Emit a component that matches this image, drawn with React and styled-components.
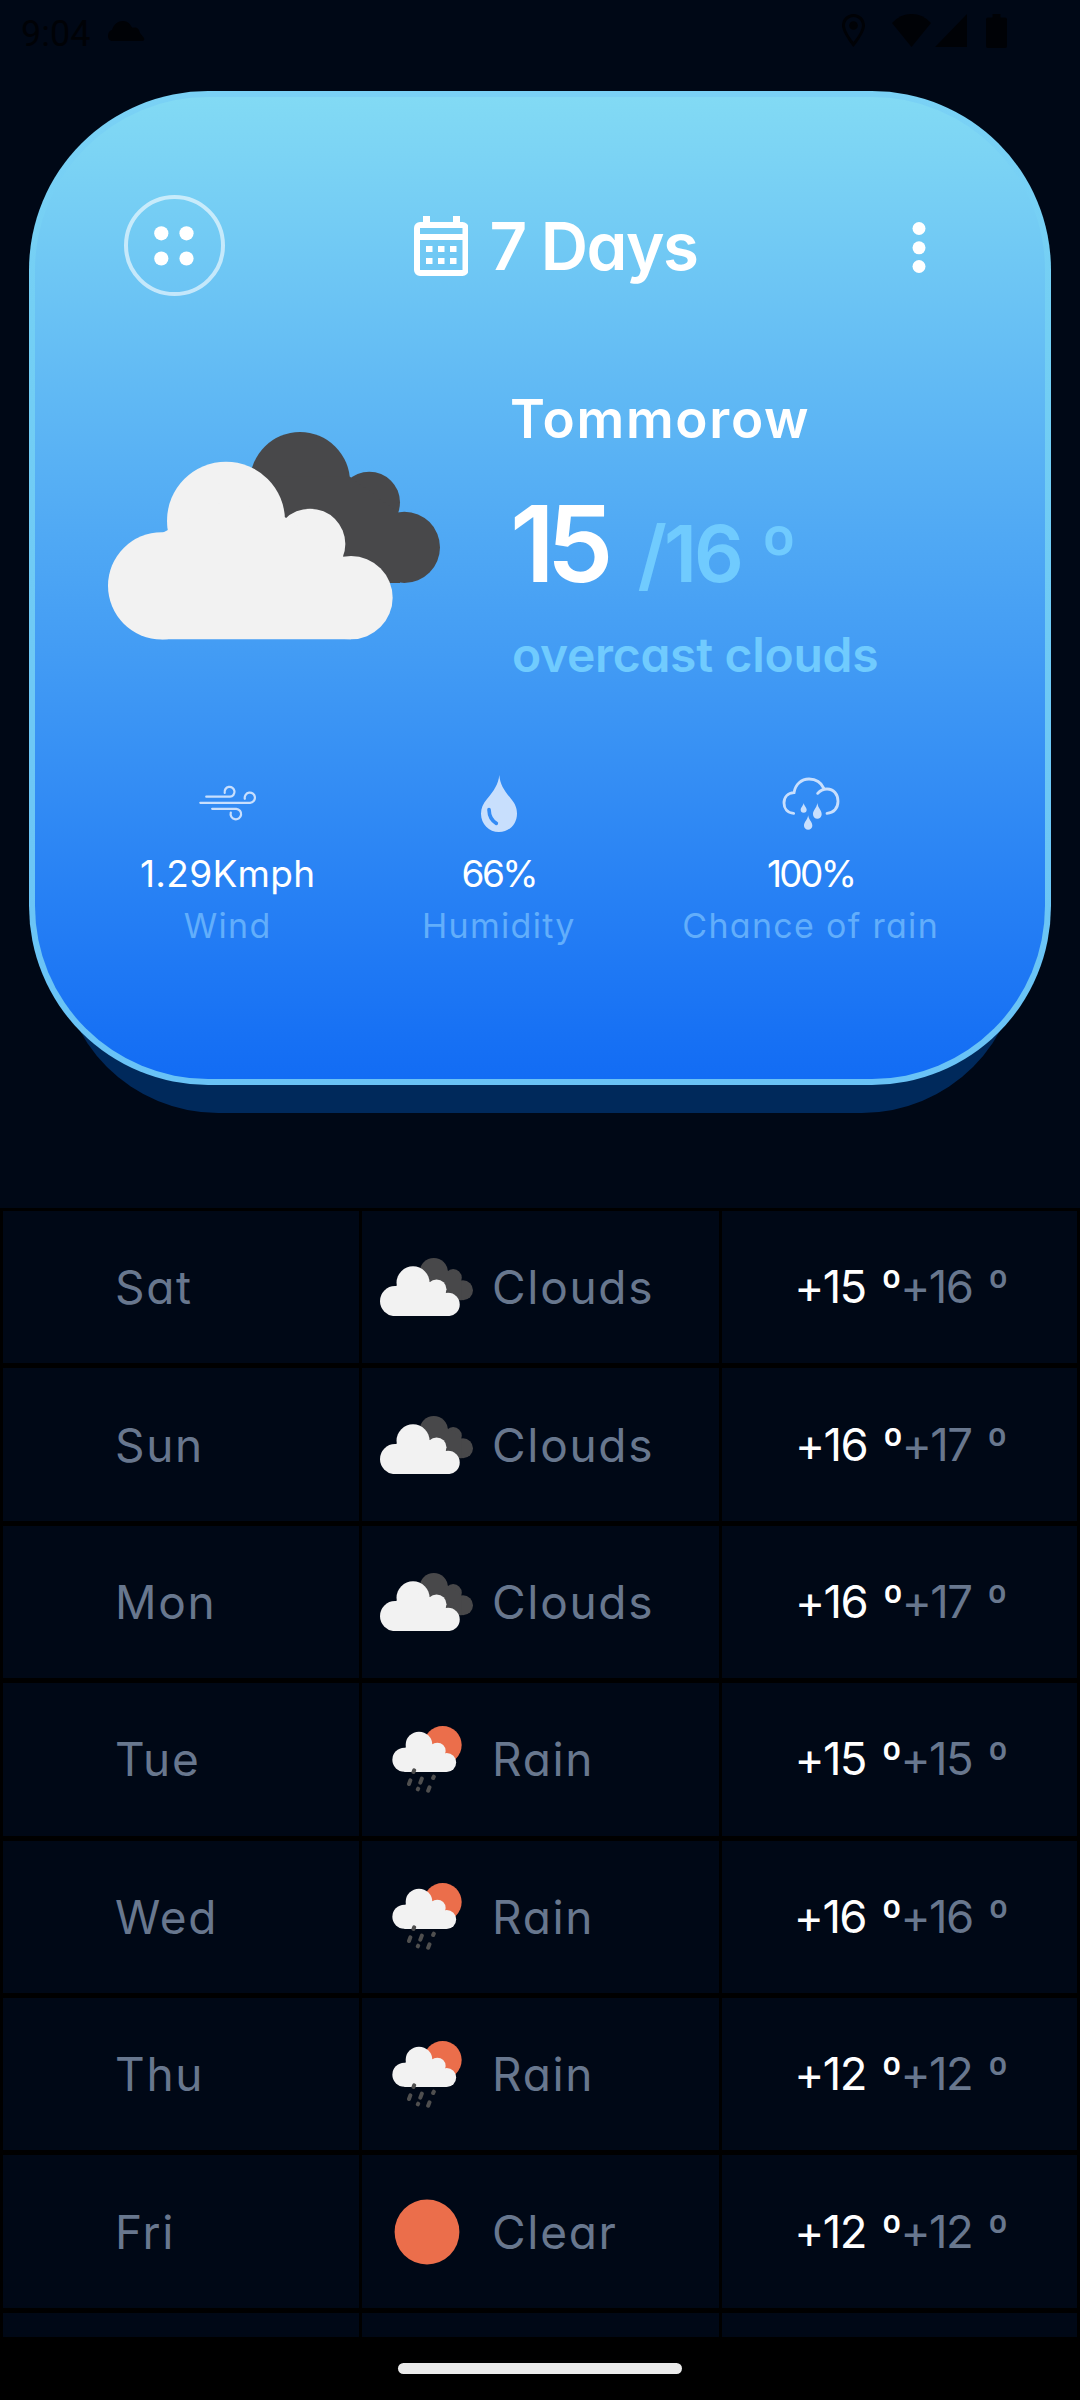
import React from 'react';
import styled, { createGlobalStyle } from 'styled-components';

const GlobalStyle = createGlobalStyle`
  body { margin: 0; background: #000816; }
  * { box-sizing: border-box; }
  svg { display: block; flex: none; }
`;

const Screen = styled.div`
  width: 1080px;
  height: 2400px;
  display: flex;
  flex-direction: column;
  overflow: hidden;
  background: #000816;
  color: #fff;
  font-family: Inter, "Liberation Sans", sans-serif;
  font-feature-settings: "cv11";
`;

const StatusBar = styled.div`
  height: 91.3px;
  flex: none;
  display: flex;
  align-items: flex-start;
  padding: 14px 73.5px 0 21px;
  color: #000206;
`;

const Clock = styled.span`
  font: 400 36px/40px Roboto, sans-serif;
  margin-right: 18px;
`;

const NoticeIcon = styled.div`
  padding-top: 7px;
`;

const StatusIcons = styled.div`
  margin-left: auto;
  display: flex;
  align-items: flex-start;
`;

const Signals = styled.div`
  display: flex;
  gap: 4px;
  margin: 0 19px 0 27px;
`;

const Card = styled.section`
  position: relative;
  z-index: 1;
  flex: none;
  height: 993.3px;
  margin: 0 28.6px;
  padding: 98px 89.4px 0;
  border: 6px solid transparent;
  border-radius: 179px;
  background:
    linear-gradient(#82daf4, #126cf4) padding-box,
    linear-gradient(#7ad1f5, #73cff4 25%, #69c2f6) border-box;
`;

const CardShade = styled.div`
  flex: none;
  height: 320px;
  margin: -291.9px 61px 0;
  border-radius: 157px;
  background: #00295b;
`;

const Header = styled.header`
  height: 101px;
  display: flex;
  align-items: center;
`;

const RoundButton = styled.button`
  width: 101px;
  height: 101px;
  padding: 0;
  display: flex;
  align-items: center;
  justify-content: center;
  border: 4px solid rgba(255, 255, 255, 0.6);
  border-radius: 50%;
  background: none;
`;

const Title = styled.h1`
  display: flex;
  align-items: center;
  gap: 21px;
  margin: 0 auto 0 189px;
  font-size: 66px;
`;

const TitleText = styled.span`
  padding-top: 3px;
  font-size: 65.5px;
  line-height: 80px;
  font-weight: 600;
  letter-spacing: -1.5px;
`;

const Summary = styled.div`
  display: flex;
  margin-top: 88px;
`;

const SummaryIcon = styled.div`
  width: 388px;
  margin: 48px 16px 0 -16px;
`;

const SummaryText = styled.div`
  display: flex;
  flex-direction: column;
  align-items: flex-start;
`;

const Text = styled.span`
  white-space: pre;
  font-size: ${(p) => p.$size}px;
  line-height: ${(p) => p.$line || p.$size}px;
  font-weight: ${(p) => p.$weight || 400};
  letter-spacing: ${(p) => p.$track || 0}px;
  color: ${(p) => p.$color || '#fff'};
`;

const Place = styled(Text)`
  margin-left: -2px;
`;

const Low = styled(Text)`
  margin: 0 32px 0 -2px;
`;

const Temps = styled.div`
  display: flex;
  align-items: baseline;
  height: 120px;
  margin: 29.5px 0 21px;
`;

const RowText = styled.span`
  white-space: pre;
  font-size: 46px;
  line-height: 60px;
  letter-spacing: 1.7px;
  color: #68778e;
`;

const RowTemp = styled.span`
  white-space: pre;
  font-size: 45.5px;
  line-height: 60px;
  letter-spacing: -1.6px;
  word-spacing: 4.5px;
  color: ${(p) => (p.$high ? '#68778e' : '#fff')};
`;

const Stats = styled.div`
  display: flex;
  justify-content: space-between;
  margin: 88.5px 17px 0 16px;
`;

const Stat = styled.div`
  display: flex;
  flex-direction: column;
  align-items: center;
`;

const StatIcon = styled.div`
  height: 60px;
  margin-bottom: 18.5px;
  display: flex;
  align-items: center;
`;

const List = styled.div`
  flex: none;
  height: 1129px;
  margin-top: 95.3px;
  padding: 3px 3px 0;
  overflow: hidden;
  background: #000;
`;

const Row = styled.div`
  display: grid;
  grid-template-columns: 356px 357px 355px;
  gap: 3px;
  height: 157.4px;
  border-bottom: 5px solid #000;
`;

const Cell = styled.div`
  display: flex;
  align-items: center;
  justify-content: ${(p) => p.$justify || 'flex-start'};
  padding-left: ${(p) => p.$pad || 0}px;
  background: #000816;
`;

const RowIcon = styled.div`
  width: 96px;
  margin-right: 17.5px;
  display: flex;
  justify-content: center;
`;

const NavBar = styled.div`
  flex: 1;
  display: flex;
  justify-content: center;
  padding-top: 26px;
  background: #000;
`;

const Handle = styled.div`
  width: 284px;
  height: 11px;
  border-radius: 6px;
  background: #ebebeb;
`;

const CloudsIcon = ({ width }) => (
  <svg width={width} height={width * 0.6245} viewBox="84 96 996 622">
    <g fill="#48484a">
      <circle cx="660" cy="246" r="150" />
      <circle cx="868" cy="307" r="92" />
      <circle cx="973" cy="442" r="107" />
      <path d="M560 230h250l150 112v207H700z" />
    </g>
    <g fill="#f2f2f2">
      <circle cx="438" cy="362" r="177" />
      <circle cx="245" cy="557.500" r="161" />
      <circle cx="690" cy="432" r="106" />
      <circle cx="813" cy="593" r="125" />
      <path d="M245 400L438 300L615 352L790 470L813 718H245z" />
    </g>
  </svg>
);

const RainIcon = () => (
  <svg width="70" height="67" viewBox="155 197 210 201">
    <circle cx="307" cy="254" r="57" fill="#eb6e4b" />
    <g fill="#f2f2f2">
      <circle cx="236" cy="254" r="40" />
      <circle cx="192" cy="298.500" r="36" />
      <circle cx="291" cy="272" r="25" />
      <circle cx="319" cy="306.500" r="28.500" />
      <path d="M192 264L236 240L275 251L314 279L319 335H192z" />
    </g>
    <g stroke="#4f4f4f" strokeWidth="12" strokeLinecap="round">
      <path d="M221.500 330L219.500 335M210 360L206 371M244.500 355L240 367M280.500 349L278.500 353M233.500 385L232.500 387M267.500 381L263.500 391" />
    </g>
  </svg>
);

const SunIcon = () => (
  <svg width="66" height="66" viewBox="0 0 66 66">
    <circle cx="33" cy="33" r="32.400" fill="#eb6e4b" />
  </svg>
);

const GridDots = () => (
  <svg width="42" height="42" viewBox="0 0 42 42" fill="#fff">
    <circle cx="8.300" cy="8.300" r="7.100" />
    <circle cx="33.500" cy="8.300" r="7.100" />
    <circle cx="8.300" cy="33.500" r="7.100" />
    <circle cx="33.500" cy="33.500" r="7.100" />
  </svg>
);

const CalendarIcon = () => (
  <svg width="54.500" height="60" viewBox="0 0 54.500 60" fill="#fff">
    <path
      fillRule="evenodd"
      d="M9 0h7v6h23V0h7v6h2.500a6 6 0 0 1 6 6v42a6 6 0 0 1-6 6H6a6 6 0 0 1-6-6V12a6 6 0 0 1 6-6h3zM6 12v6h42.500v-6zM6 24v30h42.500V24z"
    />
    <path d="M12 30h6.500v6H12zM24 30h6.500v6H24zM36 30h6.500v6H36zM12 42h6.500v6H12zM24 42h6.500v6H24zM36 42h6.500v6H36z" />
  </svg>
);

const MoreIcon = () => (
  <svg width="74" height="54" viewBox="0 0 74 54" fill="#fff">
    <circle cx="37" cy="9.500" r="6.500" />
    <circle cx="37" cy="28.800" r="6.500" />
    <circle cx="37" cy="47.500" r="6.500" />
  </svg>
);

const WindIcon = () => (
  <svg width="58" height="36" viewBox="296 133 176 108" fill="none" stroke="#c8dffd" strokeWidth="6.800" strokeLinecap="round">
    <path d="M318 168H390A15 15 0 1 0 374 156" />
    <path d="M300 186.500H451A15.500 15.500 0 1 0 435 174" />
    <path d="M336 204.500H409A16 16 0 1 1 392.500 216" />
  </svg>
);

const DropIcon = () => (
  <svg width="36" height="57" viewBox="1143 102 108 171">
    <path d="M1198 102C1200 130 1212 148 1233 173C1246 189 1251 201 1251 218C1251 249 1228 273 1197 273C1167 273 1143 249 1143 218C1143 201 1149 188 1161 174C1182 149 1195 130 1198 102Z" fill="#c8dffd" />
    <path d="M1167 206Q1168 235 1189 247" fill="none" stroke="#338bf5" strokeWidth="11" strokeLinecap="round" />
  </svg>
);

const ShowerIcon = () => (
  <svg width="58" height="53" viewBox="607 106 174 159">
    <g fill="none" stroke="#c8dffd" strokeWidth="8.500" strokeLinecap="round">
      <path d="M642 215C623 214 613 201 613 184C613 166 625 154 643 153C647 128 665 112 688 112C709 112 725 123 733 141" />
      <path d="M714 155C721 147 731 142 742 142C762 142 775 158 775 179C775 200 762 214 742 215" />
    </g>
    <g fill="#c8dffd">
      <path d="M672 184C674 194 681 197 681 204.500A9 9 0 0 1 663 204.500C663 197 670 194 672 184Z" />
      <path d="M713 184C715 200 726 205 726 218A13 13 0 0 1 700 218C700 205 711 200 713 184Z" />
      <path d="M685.500 221C687 235 698 240 698 252A12.500 12.500 0 0 1 673 252C673 240 684 235 685.500 221Z" />
    </g>
  </svg>
);

const stats = [
  { Icon: WindIcon, value: '1.29Kmph', track: 0.3, label: 'Wind' },
  { Icon: DropIcon, value: '66%', track: -2.5, label: 'Humidity' },
  { Icon: ShowerIcon, value: '100%', track: -2.7, label: 'Chance of rain' },
];

const days = [
  ['Sat', 'Clouds', 15, 16],
  ['Sun', 'Clouds', 16, 17],
  ['Mon', 'Clouds', 16, 17],
  ['Tue', 'Rain', 15, 15],
  ['Wed', 'Rain', 16, 16],
  ['Thu', 'Rain', 12, 12],
  ['Fri', 'Clear', 12, 12],
];

const SKY = '#70cbfe';

const ConditionIcon = ({ kind }) => {
  if (kind === 'Clouds') return <CloudsIcon width={93} />;
  return kind === 'Rain' ? <RainIcon /> : <SunIcon />;
};

export default function App() {
  return (
    <Screen>
      <GlobalStyle />
      <StatusBar>
        <Clock>9:04</Clock>
        <NoticeIcon>
          <svg width="37" height="20" viewBox="0 0 37 20" fill="currentColor">
            <path d="M3.500 20Q0 19 0 15Q0 10 4 9C6 3 10 0 15 0C20 0 22 3 24 6.500C30 6 31 8 32 12L36 17Q37 20 34 20Z" />
          </svg>
        </NoticeIcon>
        <StatusIcons>
          <svg width="23" height="33" viewBox="0 0 23 33" fill="currentColor">
            <path fillRule="evenodd" d="M11.500 0C5 0 0 5 0 11.500C0 19 11.500 33 11.500 33S23 19 23 11.500C23 5 18 0 11.500 0ZM11.500 3C16 3 20 7 20 11.500C20 16 15 24 11.500 28C8 24 3 16 3 11.500C3 7 7 3 11.500 3Z" />
            <circle cx="11.500" cy="11.500" r="4.300" />
          </svg>
          <Signals>
            <svg width="39" height="33" viewBox="0 0 39 33" fill="currentColor">
              <path d="M0 9Q8 0 19.500 0T39 9L19.500 33Z" />
            </svg>
            <svg width="32" height="33" viewBox="0 0 32 33" fill="currentColor">
              <path d="M32 0V33H0Z" />
            </svg>
          </Signals>
          <svg width="21" height="34" viewBox="0 0 21 34" fill="currentColor">
            <path d="M6.500 0h8v3.500H19a2 2 0 0 1 2 2V32a2 2 0 0 1-2 2H2a2 2 0 0 1-2-2V5.500a2 2 0 0 1 2-2h4.500z" />
          </svg>
        </StatusIcons>
      </StatusBar>

      <Card>
        <Header>
          <RoundButton aria-label="Menu"><GridDots /></RoundButton>
          <Title>
            <CalendarIcon />
            <TitleText>7 Days</TitleText>
          </Title>
          <MoreIcon />
        </Header>

        <Summary>
          <SummaryIcon><CloudsIcon width={332} /></SummaryIcon>
          <SummaryText>
            <Place $size={53} $line={70} $weight={600} $track={1.7}>Tommorow</Place>
            <Temps>
              <Low $size={106} $line={120} $weight={600} $track={-8}>15</Low>
              <Text $size={78} $line={120} $weight={600} $track={-3} $color={SKY}>/16</Text>
              <Text $size={78} $line={120} $weight={600} $color={SKY}>{' º'}</Text>
            </Temps>
            <Text $size={48} $line={60} $weight={600} $track={-0.3} $color={SKY}>overcast clouds</Text>
          </SummaryText>
        </Summary>

        <Stats>
          {stats.map(({ Icon, value, track, label }) => (
            <Stat key={label}>
              <StatIcon><Icon /></StatIcon>
              <Text $size={37} $line={44} $track={track}>{value}</Text>
              <Text $size={34} $line={59} $track={1.3} $color="#62aefb">{label}</Text>
            </Stat>
          ))}
        </Stats>
      </Card>
      <CardShade />

      <List>
        {days.map(([day, kind, low, high]) => (
          <Row key={day}>
            <Cell $pad={112}><RowText>{day}</RowText></Cell>
            <Cell $pad={16.5}>
              <RowIcon><ConditionIcon kind={kind} /></RowIcon>
              <RowText>{kind}</RowText>
            </Cell>
            <Cell $justify="center" $pad={2}>
              <RowTemp>+{low} º</RowTemp>
              <RowTemp $high>+{high} º</RowTemp>
            </Cell>
          </Row>
        ))}
        <Row><Cell /><Cell /><Cell /></Row>
      </List>
      <NavBar><Handle /></NavBar>
    </Screen>
  );
}
